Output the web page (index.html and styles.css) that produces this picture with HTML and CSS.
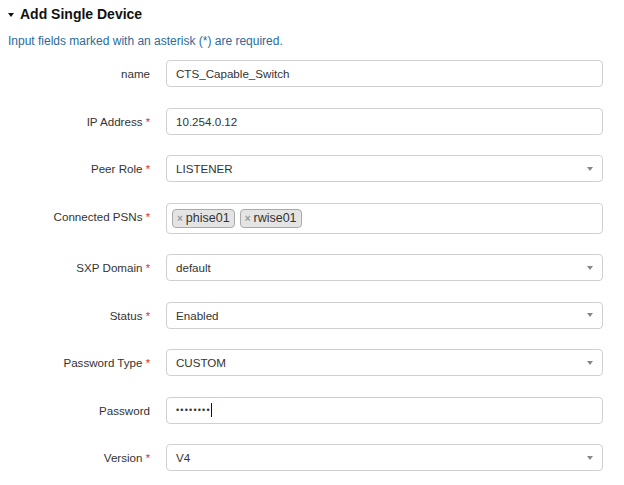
FILE: index.html
```html
<!DOCTYPE html>
<html>
<head>
<meta charset="utf-8">
<link rel="stylesheet" href="styles.css">
</head>
<body>
<div class="header">
  <span class="caret-down"></span>
  <h1 class="title">Add Single Device</h1>
</div>
<p class="hint">Input fields marked with an asterisk (*) are required.</p>
<form class="form">
  <label class="label">name</label>
  <div class="field"><span class="value">CTS_Capable_Switch</span></div>

  <label class="label">IP Address <span class="req">*</span></label>
  <div class="field"><span class="value">10.254.0.12</span></div>

  <label class="label">Peer Role <span class="req">*</span></label>
  <div class="field select"><span class="value">LISTENER</span><span class="arrow"></span></div>

  <label class="label">Connected PSNs <span class="req">*</span></label>
  <div class="field multi">
    <span class="tag"><span class="tag-x">×</span>phise01</span>
    <span class="tag"><span class="tag-x">×</span>rwise01</span>
  </div>

  <label class="label">SXP Domain <span class="req">*</span></label>
  <div class="field select"><span class="value">default</span><span class="arrow"></span></div>

  <label class="label">Status <span class="req">*</span></label>
  <div class="field select"><span class="value">Enabled</span><span class="arrow"></span></div>

  <label class="label">Password Type <span class="req">*</span></label>
  <div class="field select"><span class="value">CUSTOM</span><span class="arrow"></span></div>

  <label class="label">Password</label>
  <div class="field"><span class="dots">••••••••</span><span class="cursor"></span></div>

  <label class="label">Version <span class="req">*</span></label>
  <div class="field select"><span class="value">V4</span><span class="arrow"></span></div>
</form>
</body>
</html>
```
FILE: styles.css
```css
html, body {
  margin: 0;
  padding: 0;
  background: #ffffff;
}
body {
  padding: 0 8px;
  font-family: "Liberation Sans", Arial, sans-serif;
  color: #333333;
}
.header {
  display: flex;
  align-items: center;
  gap: 6px;
  height: 18px;
  margin-top: 5px;
}
.caret-down {
  width: 0;
  height: 0;
  border-left: 3.5px solid transparent;
  border-right: 3.5px solid transparent;
  border-top: 4px solid #111111;
  margin-top: 1px;
}
.title {
  margin: 0;
  font-size: 14px;
  font-weight: bold;
  line-height: 18px;
  color: #111111;
}
.hint {
  margin: 11px 0 0 0;
  font-size: 12px;
  line-height: 14px;
  color: #2a6b9c;
}
.form {
  display: grid;
  grid-template-columns: 142px 437px;
  column-gap: 16px;
  row-gap: 20.5px;
  margin-top: 12px;
  align-items: start;
}
.label {
  display: block;
  height: 27px;
  text-align: right;
  font-size: 11.6px;
  line-height: 27px;
  color: #333333;
  white-space: nowrap;
  overflow: hidden;
}
.req {
  color: #e0271f;
  font-size: 11px;
  line-height: 1;
}
.field {
  box-sizing: border-box;
  height: 27px;
  border: 1px solid #cfcfd2;
  border-radius: 4px;
  background: #ffffff;
  display: flex;
  align-items: center;
  padding: 0 9px;
  font-size: 11.6px;
  color: #333333;
}
.select {
  justify-content: space-between;
}
.arrow {
  width: 0;
  height: 0;
  border-left: 3.5px solid transparent;
  border-right: 3.5px solid transparent;
  border-top: 4px solid #888888;
}
.multi {
  height: 31px;
  padding: 0 5px;
  gap: 5px;
}
.tag {
  box-sizing: border-box;
  height: 19px;
  display: flex;
  align-items: center;
  padding: 0 4px;
  background: #e4e4e4;
  border: 1px solid #aaaaaa;
  border-radius: 4px;
  font-size: 12.5px;
  color: #333333;
}
.tag-x {
  color: #999999;
  font-weight: bold;
  font-size: 10px;
  margin-right: 3px;
}
.dots {
  font-size: 9px;
  letter-spacing: 1.2px;
  color: #333333;
}
.cursor {
  width: 1px;
  height: 14px;
  background: #111111;
}
```
